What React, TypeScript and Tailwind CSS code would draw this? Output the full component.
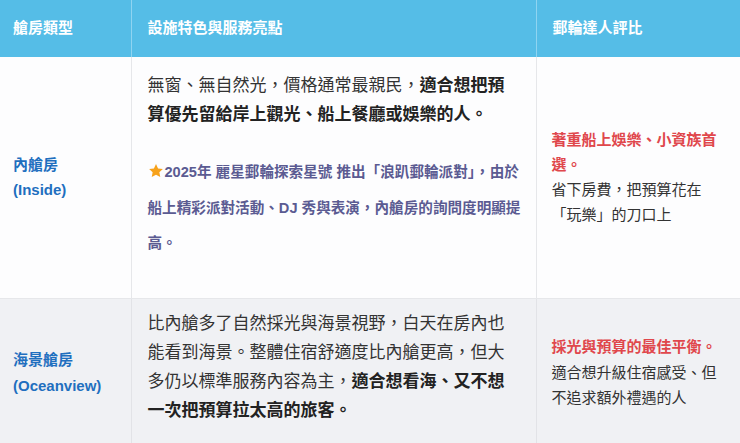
import React from "react";

function Star() {
  return (
    <svg width="16" height="16" viewBox="0 0 24 24" className="inline-block align-[-2px] mr-[1px]">
      <path d="M12 1.5l3.1 6.6 7.2.9-5.3 5 1.4 7.1L12 17.6l-6.4 3.5 1.4-7.1-5.3-5 7.2-.9z" fill="#f7a21b" />
    </svg>
  );
}

export default function App() {
  return (
    <div className="w-[740px] h-[443px] overflow-hidden bg-white font-['Liberation_Sans','Noto_Sans_CJK_TC',sans-serif]">
      <table className="w-[740px] border-collapse table-fixed">
        <colgroup>
          <col className="w-[131px]" />
          <col className="w-[405px]" />
          <col />
        </colgroup>
        <thead>
          <tr className="bg-[#55bde7] text-white">
            <th className="h-[57px] text-left align-middle pl-[13px] text-[15px] font-bold border-r border-[#8fd4f1]">艙房類型</th>
            <th className="h-[57px] text-left align-middle pl-[16px] text-[15px] font-bold border-r border-[#8fd4f1]">設施特色與服務亮點</th>
            <th className="h-[57px] text-left align-middle pl-[16px] text-[15px] font-bold">郵輪達人評比</th>
          </tr>
        </thead>
        <tbody>
          <tr className="bg-[#fdfdfe] border-b border-[#e6e7ea]">
            <td className="h-[240px] align-middle pl-[13px] pr-2 text-[15px] leading-[25px] font-bold text-[#1f6fbf] border-r border-[#e6e7ea]">
              內艙房<br />(Inside)
            </td>
            <td className="align-top pl-[16px] pr-[12px] pt-[14px] pb-[36px] border-r border-[#e6e7ea]">
              <p className="pr-[6px] text-[17px] leading-[29px] text-[#333]">
                無窗、無自然光，價格通常最親民，<b className="font-bold text-[#222]">適合想把預算優先留給岸上觀光、船上餐廳或娛樂的人。</b>
              </p>
              <p className="mt-[26px] text-[14.6px] leading-[35.5px] font-bold text-[#5b5b92]">
                <Star />2025年 麗星郵輪探索星號 推出「浪趴郵輪派對」，由於船上精彩派對活動、DJ 秀與表演，內艙房的詢問度明顯提高。
              </p>
            </td>
            <td className="align-middle pl-[15px] pr-[12px] text-[15px] leading-[25px] text-[#333]">
              <span className="font-bold text-[#e0474c]">著重船上娛樂、小資族首選。</span>
              <br />
              省下房費，把預算花在「玩樂」的刀口上
            </td>
          </tr>
          <tr className="bg-[#f0f1f4]">
            <td className="align-middle pl-[13px] pr-2 text-[15px] leading-[26px] font-bold text-[#1f6fbf] border-r border-[#e2e3e7]">
              海景艙房<br />(Oceanview)
            </td>
            <td className="align-top pl-[16px] pr-[18px] pt-[10px] pb-[22px] border-r border-[#e2e3e7]">
              <p className="text-[17px] leading-[29px] text-[#333]">
                比內艙多了自然採光與海景視野，白天在房內也能看到海景。整體住宿舒適度比內艙更高，但大多仍以標準服務內容為主，<b className="font-bold text-[#222]">適合想看海、又不想一次把預算拉太高的旅客。</b>
              </p>
            </td>
            <td className="align-middle pl-[15px] pr-[12px] text-[15px] leading-[25.5px] text-[#333]">
              <span className="font-bold text-[#e0474c]">採光與預算的最佳平衡。</span>
              <br />
              適合想升級住宿感受、但不追求額外禮遇的人
            </td>
          </tr>
        </tbody>
      </table>
    </div>
  );
}
